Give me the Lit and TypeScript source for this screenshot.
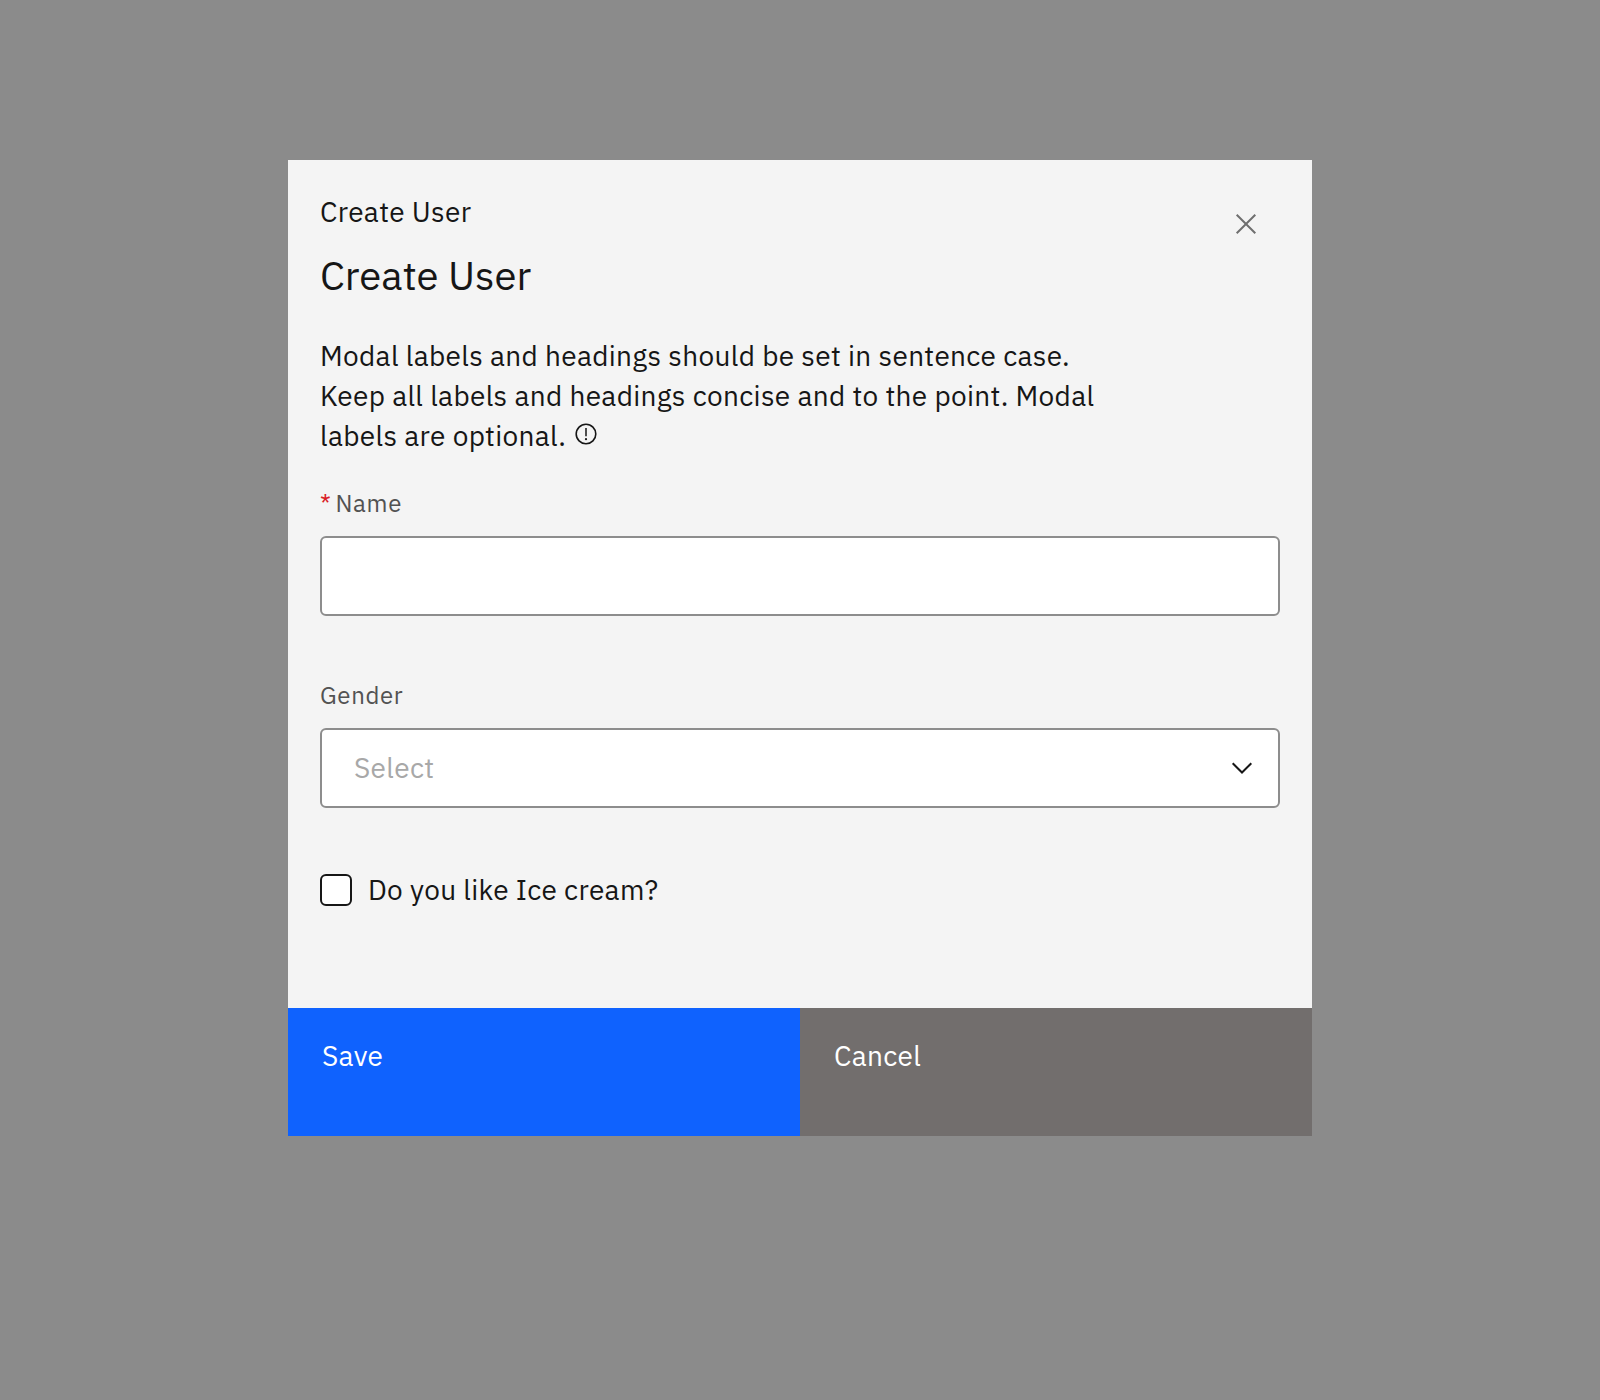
import { LitElement, html, css } from "lit";

class AppRoot extends LitElement {
  static styles = css`
    :host {
      display: block;
      font-family: "IBM Plex Sans", "Open Sans", "Noto Sans", sans-serif;
      font-size: 28px;
      line-height: 40px;
      letter-spacing: 0.32px;
      color: #161616;
    }
    * { box-sizing: border-box; margin: 0; }
    .overlay {
      height: 1400px;
      padding-top: 160px;
      background: #8b8b8b;
      display: flex;
      justify-content: center;
      align-items: flex-start;
    }
    .modal {
      width: 1024px;
      height: 976px;
      background: #f4f4f4;
      display: flex;
      flex-direction: column;
    }
    .header {
      display: flex;
      justify-content: space-between;
      padding: 34px 52px 0 32px;
    }
    .label { font-size: 28px; font-weight: 400; line-height: 36px; }
    .title { font-size: 40px; font-weight: 400; line-height: 52px; letter-spacing: 0; margin-top: 19px; }
    .close {
      width: 28px;
      height: 28px;
      padding: 0;
      border: 0;
      background: none;
      margin-top: 16px;
    }
    svg { display: block; }
    .body { flex: 1; padding: 35px 32px 0; }
    .copy { width: 800px; }
    .last { display: flex; }
    .info { margin: 6px 0 0 8px; }
    .field-label {
      display: flex;
      font-size: 24px;
      line-height: 32px;
      color: #525252;
      letter-spacing: 0.64px;
    }
    .name { margin-top: 31px; }
    .gender { margin-top: 63px; }
    .required { width: 15.5px; color: #da1e28; }
    .control {
      display: flex;
      align-items: center;
      justify-content: space-between;
      width: 100%;
      height: 80px;
      margin-top: 17px;
      padding: 0 24px 0 32px;
      border: 2px solid #8d8d8d;
      border-radius: 6px;
      background: #fff;
      font: inherit;
      outline: none;
    }
    .placeholder { color: #a8a8a8; }
    .check { display: flex; align-items: center; gap: 16px; height: 40px; margin-top: 62px; }
    .box { width: 32px; height: 32px; border: 2px solid #161616; border-radius: 6px; background: #fff; }
    .footer { display: flex; height: 128px; }
    .btn {
      flex: 1;
      border: 0;
      padding: 28px 34px 0;
      display: flex;
      align-items: flex-start;
      font: inherit;
      color: #fff;
      letter-spacing: 0.32px;
    }
    .save { background: #0f62fe; }
    .cancel { background: #726e6d; }
  `;

  render() {
    return html`
      <div class="overlay">
        <section class="modal">
          <header class="header">
            <div>
              <h2 class="label">Create User</h2>
              <h1 class="title">Create User</h1>
            </div>
            <button class="close" aria-label="Close">
              <svg width="28" height="28" viewBox="0 0 28 28" fill="none" stroke="#6f6f6f" stroke-width="2">
                <path d="M4.7 4.7 L23.3 23.3 M23.3 4.7 L4.7 23.3" />
              </svg>
            </button>
          </header>
          <div class="body">
            <div class="copy">
              <div>Modal labels and headings should be set in sentence case.</div>
              <div>Keep all labels and headings concise and to the point. Modal</div>
              <div class="last">
                <span>labels are optional.</span>
                <svg class="info" width="24" height="24" viewBox="0 0 24 24" fill="none" stroke="#161616" stroke-width="1.6">
                  <circle cx="12" cy="12" r="9.8" />
                  <path d="M12 6 V14.2" stroke-width="1.5" />
                  <circle cx="12" cy="17.2" r="1.1" fill="#161616" stroke="none" />
                </svg>
              </div>
            </div>
            <label class="field-label name" for="name"><span class="required">*</span>Name</label>
            <input class="control" id="name" type="text" />
            <div class="field-label gender">Gender</div>
            <div class="control" role="combobox">
              <span class="placeholder">Select</span>
              <svg width="24" height="24" viewBox="0 0 24 24" fill="none" stroke="#161616" stroke-width="2">
                <path d="M2.7 7.2 L12 16.5 L21.3 7.2" />
              </svg>
            </div>
            <div class="check">
              <span class="box"></span>
              <span>Do you like Ice cream?</span>
            </div>
          </div>
          <footer class="footer">
            <button class="btn save">Save</button>
            <button class="btn cancel">Cancel</button>
          </footer>
        </section>
      </div>
    `;
  }
}
customElements.define("app-root", AppRoot);
